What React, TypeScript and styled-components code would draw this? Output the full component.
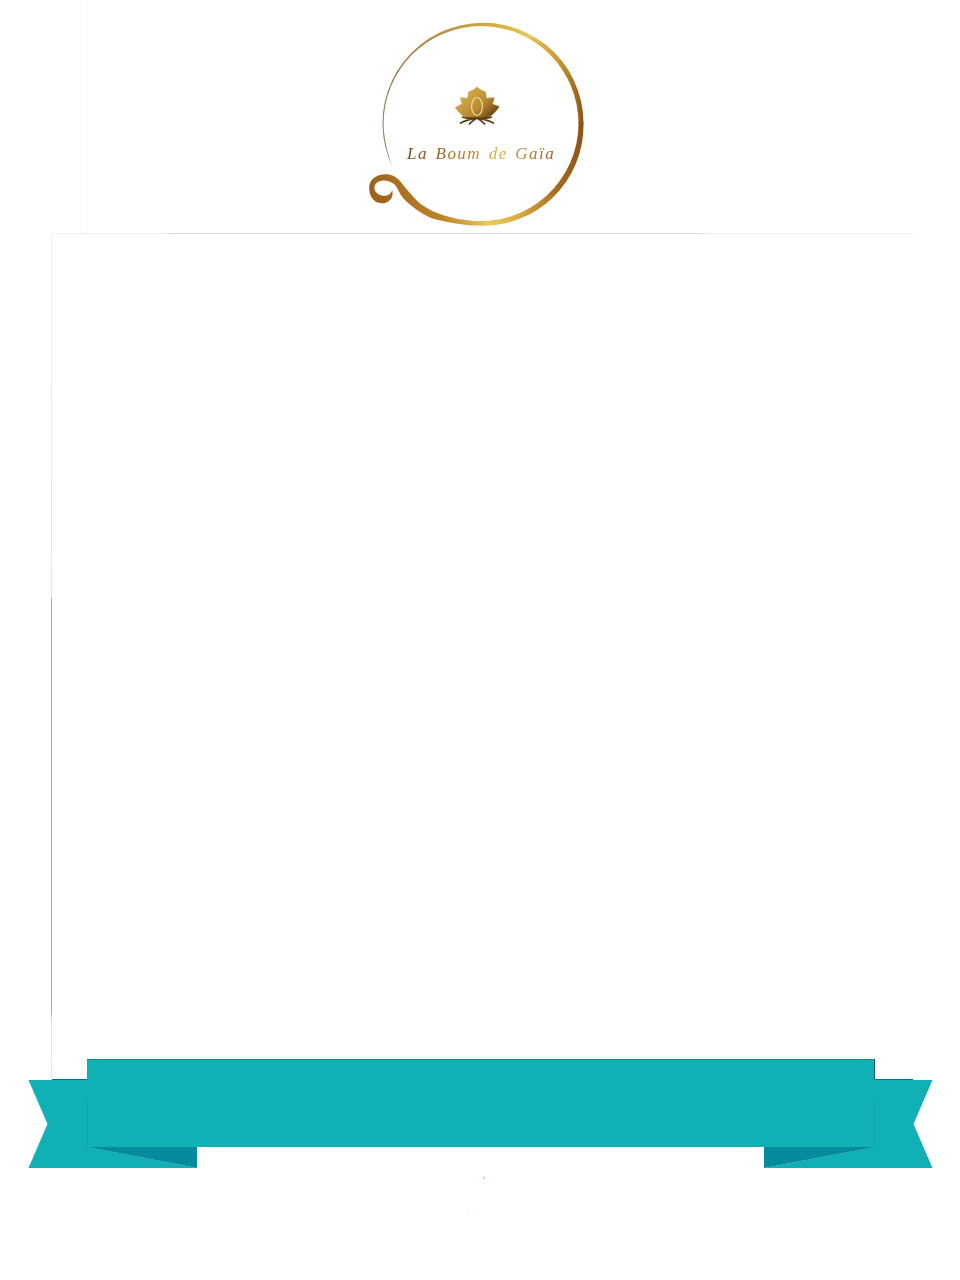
import React from "react";
import styled, { createGlobalStyle } from "styled-components";

const Global = createGlobalStyle`
  html, body { margin: 0; padding: 0; background: #ffffff; }
  body { font-family: "Liberation Serif", serif; }
`;

const Page = styled.div`
  width: 960px;
  height: 1280px;
  display: flex;
  flex-direction: column;
  background: #ffffff;
  overflow: hidden;
`;

const Header = styled.header`
  height: 233px;
  display: flex;
  align-items: flex-start;
  margin-left: 81px;
  padding-left: 278px;
  padding-top: 10px;
  box-sizing: border-box;
  border-left: 1px solid #fafafa;
`;

const LogoSvg = styled.svg`
  display: block;
  width: 240px;
  height: 225px;
  flex: none;
  filter: blur(0.45px);
`;

const LogoName = styled.text`
  font-family: "Liberation Serif", serif;
  font-style: italic;
  font-size: 17px;
  letter-spacing: 1.45px;
  word-spacing: 2px;
`;

const Panel = styled.main`
  margin-left: 51px;
  width: 862px;
  height: 826px;
  flex: none;
  box-sizing: border-box;
  background:
    linear-gradient(90deg, #efefef 13%, #d6d6d6 14%, #d6d6d6 75%, #efefef 76%) left top / 100% 1px no-repeat,
    linear-gradient(#f0f0f0, #e4e4e4 44%, #a8a8a8 44.4%, #a8a8a8 94%, #e8e8e8 95.5%) left top / 1px 100% no-repeat;
`;

const RibbonSvg = styled.svg`
  display: block;
  width: 906px;
  height: 156px;
  margin-left: 28px;
  flex: none;
`;

const Logo = () => (
  <LogoSvg viewBox="360 10 240 225" role="img" aria-label="La Boum de Gaïa">
    <defs>
      <linearGradient id="upper" gradientUnits="userSpaceOnUse" x1="383" y1="120" x2="584" y2="120">
        <stop offset="0" stopColor="#8f8068" />
        <stop offset="0.22" stopColor="#b08a48" />
        <stop offset="0.55" stopColor="#d8ab42" />
        <stop offset="0.72" stopColor="#e9c65c" />
        <stop offset="0.88" stopColor="#c8962e" />
        <stop offset="1" stopColor="#8c5416" />
      </linearGradient>
      <linearGradient id="lower" gradientUnits="userSpaceOnUse" x1="584" y1="130" x2="370" y2="190">
        <stop offset="0" stopColor="#8c5416" />
        <stop offset="0.18" stopColor="#a2671c" />
        <stop offset="0.38" stopColor="#d8aa3e" />
        <stop offset="0.52" stopColor="#ebca62" />
        <stop offset="0.72" stopColor="#bd8429" />
        <stop offset="1" stopColor="#9a5f1b" />
      </linearGradient>
      <linearGradient id="lotus" gradientUnits="userSpaceOnUse" x1="462" y1="88" x2="490" y2="120">
        <stop offset="0" stopColor="#dcb654" />
        <stop offset="0.6" stopColor="#b98a30" />
        <stop offset="1" stopColor="#664010" />
      </linearGradient>
      <linearGradient id="name" gradientUnits="userSpaceOnUse" x1="408" y1="150" x2="556" y2="150">
        <stop offset="0" stopColor="#7c4a18" />
        <stop offset="0.45" stopColor="#c08a36" />
        <stop offset="0.58" stopColor="#e0b050" />
        <stop offset="1" stopColor="#96602a" />
      </linearGradient>
    </defs>
    <path
      fill="url(#upper)"
      d="M393 168 A100.5 100.5 0 1 1 583.5 123.5 L578.5 123.5 A97.45 97.45 0 0 0 383.6 123.5 C383.7 138 387.5 154 393 168 Z"
    />
    <path
      fill="url(#lower)"
      d="M578.5 122 L583.5 122 L583.5 123.5 A100.5 100.5 0 0 1 478 225.6 C466 225.6 450 223.5 431.7 218.3 C420 213 410 205.5 403.3 198.3 C399 193 398 188.5 395 185 C391 181 384 179.5 379 181.5 C375 183 373.5 187 375 190.5 C377 195 384 197 388.3 195 C390.2 193.8 391.5 192 392.3 190 C393 194 392.5 198 390 200 C387.5 202.5 384.5 203.5 381.7 203.3 C377 203 374 201 372 198 C369 193.5 368.5 187 370 183 C372 178 378 174.3 385 174.3 C391 174 396 176.5 400 181 C404 186 407.5 190.5 411.7 195 C416 200 420 204 425 206.7 C431 211 440 214.5 450 217 C456 219 463 220 470 220.4 A97.5 97.5 0 0 0 578.5 123.5 Z"
    />
    <path
      fill="url(#lotus)"
      d="M477 86.5 C475 89 471 91 468.5 91.5 C468 94 467.5 96 467.5 98 C465 97.5 462 97.5 460 97.5 C460.5 100 461 102 462 104 C460 104.5 457 106 455 107.5 C458 112 462 116 467 118 L487 118 C492 116 496 112 499.5 106.5 C497 105.5 494.5 104.5 492.5 104 C493.5 102 494 100 494.5 97.5 C492 97.5 489 97.5 486.5 98 C486.5 96 486 94 485.5 91.5 C483 91 479 89 477 86.5 Z"
    />
    <path
      d="M462 117 C468 119 486 119 492 117 M477 118 C472 119 465 120 460 123.5 M477 118 C474 120 471 122 469 124.5 M477 118 C480 120 483 122 485 124.5 M477 118 C482 119 489 120 494 123.5"
      fill="none"
      stroke="#5a3a12"
      strokeWidth="1.6"
    />
    <ellipse cx="477" cy="106.5" rx="5.4" ry="9" fill="none" stroke="#f2deA6" strokeWidth="1.1" />
    <LogoName x="407" y="159" fill="url(#name)">La Boum de Gaïa</LogoName>
  </LogoSvg>
);

const Ribbon = () => (
  <RibbonSvg viewBox="28 1059 906 156" role="img" aria-label="ribbon">
    <rect x="51" y="1059" width="1" height="21" fill="#e4e4e4" />
    <path d="M28.5 1080 H88 V1147 L197 1168 H28.5 L47.5 1124 Z" fill="#11b0b5" />
    <path d="M932.5 1080 H874 V1147 L764 1168 H932.5 L913.5 1124 Z" fill="#11b0b5" />
    <path d="M87 1147 H197 V1168 Z" fill="#068a9e" />
    <path d="M875 1147 H764 V1168 Z" fill="#068a9e" />
    <path d="M52 1079.5 H87 M875 1079.5 H913" stroke="#0f6f74" strokeWidth="1" />
    <rect x="87" y="1059" width="788" height="88" fill="#11b0b5" />
    <path d="M87 1059.5 H875" stroke="#0e8e92" strokeWidth="1" />
    <path d="M874.5 1059 V1080" stroke="#0c5c60" strokeWidth="1" />
    <path d="M87.5 1102 V1146 M874.5 1102 V1146" fill="none" stroke="#10a4aa" strokeWidth="1" />
    <path d="M483 1176.5 L485 1179" stroke="#5cc8cc" strokeWidth="1" fill="none" />
    <rect x="466" y="1213" width="1" height="1" fill="#a8e2e4" />
  </RibbonSvg>
);

export default function App() {
  return (
    <Page>
      <Global />
      <Header>
        <Logo />
      </Header>
      <Panel />
      <Ribbon />
    </Page>
  );
}
